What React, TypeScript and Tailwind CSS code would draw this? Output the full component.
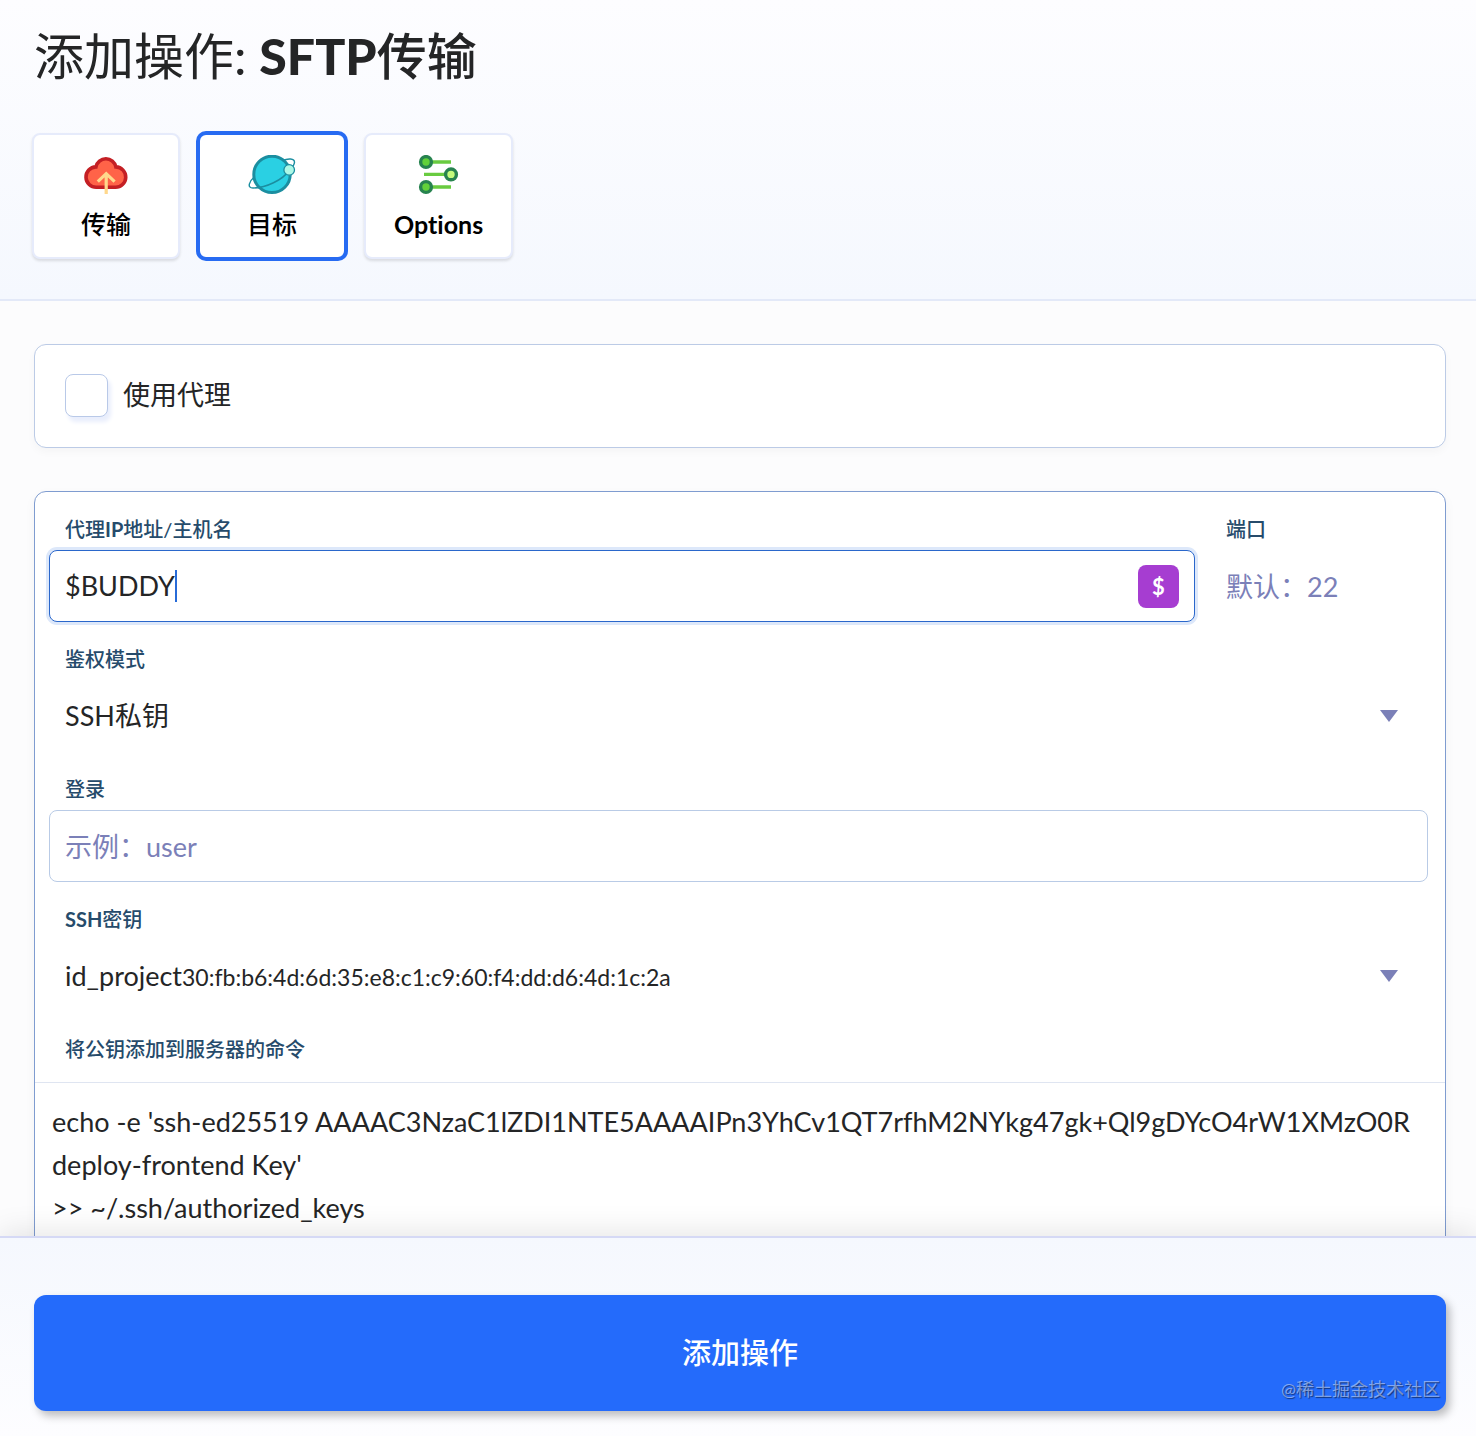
import { useState } from "react";
import type { ReactNode } from "react";

function CloudIcon() {
  return (
    <svg viewBox="0 0 48 40" className="h-10 w-12" fill="none" aria-hidden="true">
      <path
        d="M14.5 32.3a10.2 10.2 0 0 1-.6-20.4A10.2 10.2 0 0 1 33.9 11.9a10.2 10.2 0 0 1-.7 20.4z"
        fill="#ff6348"
        stroke="#c41f24"
        strokeWidth="3.6"
      />
      <path d="M24.2 39V19M15.8 26.6l8.4-8 8.4 8" stroke="#ffd88c" strokeWidth="3.2" />
    </svg>
  );
}

function PlanetIcon() {
  return (
    <svg viewBox="0 0 48 40" className="h-10 w-12" fill="none" aria-hidden="true">
      <circle cx="24" cy="19.4" r="18.2" fill="#2ad0e3" stroke="#1b8ea0" strokeWidth="3" />
      <path
        d="M5.8 22.5C1.5 26-1.5 33 5 33c12.5 0 30-8 36.5-18M34.5 5.5C40 3.2 46.5 3.2 46.5 7.2c0 2.3-1.5 4-3.5 6.3"
        stroke="#1b8ea0"
        strokeWidth="1.4"
      />
      <circle cx="41.2" cy="14.9" r="5.3" fill="#adf8e6" stroke="#1b8ea0" strokeWidth="1.3" />
    </svg>
  );
}

function OptionsIcon() {
  return (
    <svg viewBox="0 0 48 40" className="h-10 w-12" fill="none" aria-hidden="true">
      <path d="M16 7h20M9 19.4h22M16 32h20" stroke="#69cb40" strokeWidth="3.4" />
      <g stroke="#27834f" strokeWidth="3.4">
        <circle cx="11" cy="7" r="5.4" fill="#62d13a" />
        <circle cx="36" cy="19.4" r="5.4" fill="#c4fa7c" />
        <circle cx="11" cy="32" r="5.4" fill="#62d13a" />
      </g>
    </svg>
  );
}

function Triangle() {
  return (
    <svg viewBox="0 0 18 12" className="pointer-events-none h-3 w-[18px] shrink-0 fill-[#7b80b8]" aria-hidden="true">
      <path d="M0 0h18l-9 12z" />
    </svg>
  );
}

const tabs = [
  { id: "transfer", label: "传输", icon: <CloudIcon /> },
  { id: "target", label: "目标", icon: <PlanetIcon /> },
  { id: "options", label: <b className="font-bold">Options</b>, icon: <OptionsIcon /> },
];

const command = `echo -e 'ssh-ed25519 AAAAC3NzaC1lZDI1NTE5AAAAIPn3YhCv1QT7rfhM2NYkg47gk+Ql9gDYcO4rW1XMzO0R
deploy-frontend Key'
>> ~/.ssh/authorized_keys`;

function Field({ id, label, children }: { id: string; label: ReactNode; children: ReactNode }) {
  return (
    <div>
      <label
        htmlFor={id}
        className="block px-4 pt-6 pb-2 text-[20px] leading-[26px] font-medium text-[#264b6b]"
      >
        {label}
      </label>
      {children}
    </div>
  );
}

export default function App() {
  const [activeTab, setActiveTab] = useState("target");
  const [host, setHost] = useState("$BUDDY");

  return (
    <div className="flex h-screen flex-col bg-[#fcfcfd] font-['Lato','Noto_Sans_CJK_SC',sans-serif] text-[27px] text-[#242526] [font-variant-ligatures:none]">
      <header className="shrink-0 border-b-2 border-[#e3e9f8] bg-linear-to-b from-[#fdfdff] to-[#f5f8fe] pt-[18px] pr-[30px] pb-10 pl-[34px]">
        <h1 className="text-[50px] leading-[76px] font-normal">
          添加操作: <span className="font-black">SFTP</span>
          <span className="font-medium">传输</span>
        </h1>
        <div className="mt-[39px] -ml-0.5 flex gap-[18px]">
          {tabs.map((tab) => (
            <button
              key={tab.id}
              type="button"
              aria-pressed={activeTab === tab.id}
              onClick={() => setActiveTab(tab.id)}
              className={`flex min-w-[148px] flex-col items-center rounded-lg border-2 bg-white px-7 pt-5 pb-[13px] text-[25px] leading-10 font-medium text-black ${
                activeTab === tab.id
                  ? "border-[#276bf2] ring-2 ring-[#276bf2]"
                  : "border-[#e6ebfb] shadow-[0_2px_3px_#0000001f]"
              }`}
            >
              {tab.icon}
              <span className="mt-[9px]">{tab.label}</span>
            </button>
          ))}
        </div>
      </header>

      <main className="min-h-0 flex-1 overflow-hidden pt-[43px] pr-[30px] pl-[34px]">
        <label className="flex items-center gap-[15px] rounded-xl border border-[#bccbe6] bg-white px-[30px] pt-[29px] pb-[30px] shadow-[0_4px_8px_#00000008]">
          <input
            type="checkbox"
            className="size-[43px] appearance-none rounded-lg border border-[#b9c9e8] bg-white shadow-[3px_5px_4px_#e9eefc] checked:bg-[#276bf2]"
          />
          使用代理
        </label>

        <section className="mt-[43px] rounded-xl border border-[#7f9cd0] bg-white shadow-[0_4px_12px_#0000000a]">
          <div className="pr-[17px] pl-[14px]">
            <div className="grid grid-cols-[1fr_218px] gap-[15px]">
              <Field id="host" label={<>代理<b className="font-bold">IP</b>地址/主机名</>}>
                <div className="flex h-[72px] items-center rounded-lg border border-[#2a67cb] bg-white px-[15px] ring-3 ring-[#dde8fa]">
                  <input
                    id="host"
                    value={host}
                    onChange={(e) => setHost(e.target.value)}
                    className="field-sizing-content caret-transparent outline-none"
                  />
                  <span className="h-8 w-0.5 bg-[#276bd8]" />
                  <button
                    type="button"
                    aria-label="插入变量"
                    className="ml-auto h-[43px] w-[41px] rounded-lg bg-[#a63dd1] text-[22px] font-bold text-white"
                  >
                    $
                  </button>
                </div>
              </Field>
              <Field id="port" label="端口">
                <input
                  id="port"
                  placeholder="默认：22"
                  className="h-[72px] w-full px-4 outline-none placeholder:text-[#7b80b8]"
                />
              </Field>
            </div>

            <Field id="auth" label="鉴权模式">
              <div className="flex items-center pr-[30px]">
                <select id="auth" className="h-[72px] flex-1 appearance-none px-4 outline-none">
                  <option>SSH私钥</option>
                </select>
                <Triangle />
              </div>
            </Field>

            <Field id="login" label="登录">
              <input
                id="login"
                placeholder="示例：user"
                className="h-[72px] w-full rounded-lg border border-[#b9cbe6] px-[15px] outline-none placeholder:text-[#7b80b8]"
              />
            </Field>

            <Field id="key" label={<><b className="font-bold">SSH</b>密钥</>}>
              <div className="relative flex h-[72px] items-center pr-[30px] pl-4">
                <div className="flex flex-1 items-baseline">
                  <span>id_project</span>
                  <span className="text-[23px]">30:fb:b6:4d:6d:35:e8:c1:c9:60:f4:dd:d6:4d:1c:2a</span>
                </div>
                <Triangle />
                <select id="key" className="absolute inset-0 opacity-0">
                  <option>id_project</option>
                </select>
              </div>
            </Field>
          </div>

          <h2 className="border-b border-[#dfe5f1] px-[30px] pt-6 pb-5 text-[20px] leading-[26px] font-medium text-[#264b6b]">
            将公钥添加到服务器的命令
          </h2>
          <pre className="px-[17px] pt-[17px] pb-10 font-['Lato','Noto_Sans_CJK_SC',sans-serif] leading-[43px] whitespace-pre-wrap">
            {command}
          </pre>
        </section>
      </main>

      <footer className="relative shrink-0 border-t-2 border-[#d5d9f5] bg-linear-to-b from-[#f5f8fe] to-[#fdfdff] pt-[57px] pr-[30px] pb-[25px] pl-[34px] shadow-[0_-4px_28px_#0000001a]">
        <button
          type="button"
          className="h-[116px] w-full rounded-xl bg-[#246bfb] text-[29px] font-medium text-white shadow-[4px_5px_9px_#00000040]"
        >
          添加操作
        </button>
        <span className="pointer-events-none absolute right-9 bottom-[34px] text-[18px] leading-[26px] text-white/45 [text-shadow:1px_1px_1px_#00000080]">
          @稀土掘金技术社区
        </span>
      </footer>
    </div>
  );
}
